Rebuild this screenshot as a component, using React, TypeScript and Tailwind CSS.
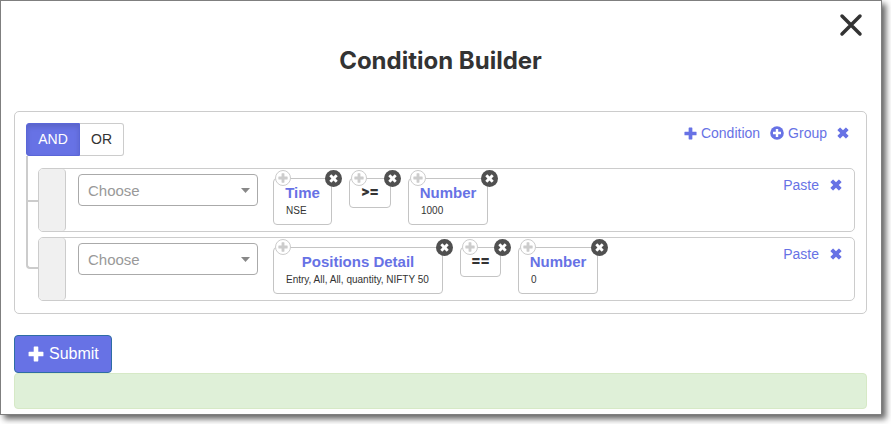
type Token = { title: string; detail?: string; size: string };
type Rule = { id: string; tokens: Token[] };

const rules: Rule[] = [
  {
    id: "rule-1",
    tokens: [
      { title: "Time", detail: "NSE", size: "min-w-[59px]" },
      { title: ">=", size: "min-w-[42px]" },
      { title: "Number", detail: "1000", size: "min-w-[80px]" },
    ],
  },
  {
    id: "rule-2",
    tokens: [
      { title: "Positions Detail", detail: "Entry, All, All, quantity, NIFTY 50", size: "min-w-[170px]" },
      { title: "==", size: "min-w-[41px]" },
      { title: "Number", detail: "0", size: "min-w-[80px]" },
    ],
  },
];

function Plus({ className }: { className: string }) {
  return (
    <svg viewBox="0 0 14 14" fill="currentColor" className={className} aria-hidden="true">
      <path d="M5 1q0-.5.5-.5h3q.5 0 .5.5v4h4q.5 0 .5.5v3q0 .5-.5.5H9v4q0 .5-.5.5h-3Q5 13.500 5 13V9H1q-.5 0-.5-.5v-3Q.5 5 1 5h4z" />
    </svg>
  );
}

function Cross({ className }: { className: string }) {
  return (
    <svg viewBox="0 0 14 14" fill="currentColor" className={className} aria-hidden="true">
      <path d="M4 .8 7 3.800l3-3q.4-.4.8 0l2.400 2.400q.4.4 0 .8l-3 3 3 3q.4.4 0 .8l-2.400 2.400q-.4.4-.8 0l-3-3-3 3q-.4.4-.8 0L.8 10.800q-.4-.4 0-.8l3-3-3-3q-.4-.4 0-.8L3.200.8q.4-.4.8 0z" />
    </svg>
  );
}

function PlusCircle() {
  return (
    <svg viewBox="0 0 14 14" className="size-[14px]" aria-hidden="true">
      <circle cx="7" cy="7" r="6.800" fill="currentColor" />
      <path d="M7 3v8M3 7h8" stroke="#fff" strokeWidth="2.400" />
    </svg>
  );
}

function TokenCard({ token }: { token: Token }) {
  return (
    <div className={`relative flex flex-col items-start rounded-[4px] border border-[#c4c4c4] px-[10px] pt-1 ${token.size} ${token.detail ? "h-[47px]" : "h-[30px]"}`}>
      <button type="button" aria-label="Add" className="absolute -top-[9px] left-px flex size-4 items-center justify-center rounded-full border border-[#ccc] bg-white text-[#ccc]">
        <Plus className="size-[10px]" />
      </button>
      <button type="button" aria-label="Remove" className="absolute -top-[9px] -right-[11px] flex size-[17px] items-center justify-center rounded-full bg-[#505050] text-white">
        <Cross className="size-[9px]" />
      </button>
      {token.detail ? (
        <>
          <span className="w-full text-center text-[15px] leading-5 font-bold whitespace-nowrap text-[#6772e5]">{token.title}</span>
          <span className="px-[2px] text-[10px] leading-4 whitespace-nowrap">{token.detail}</span>
        </>
      ) : (
        <span className="w-full text-center font-['Roboto',sans-serif] text-[16px] leading-[18px] font-black whitespace-nowrap">{token.title}</span>
      )}
    </div>
  );
}

function RuleRow({ rule, last }: { rule: Rule; last: boolean }) {
  return (
    <li className="flex">
      <div className="flex w-3 shrink-0 flex-col" aria-hidden="true">
        <div className={last ? "h-8 rounded-bl-[4px] border-b-2 border-l-2 border-[#ccc]" : "h-[46px] border-b-2 border-l-2 border-[#ccc]"} />
        {!last && <div className="flex-1 border-l-2 border-[#ccc]" />}
      </div>
      <div className={last ? "min-w-0 flex-1" : "min-w-0 flex-1 pt-3 pb-[5px]"}>
        <div className="flex h-16 items-start rounded-[5px] border border-[#ccc]">
          <div className="w-[27px] shrink-0 self-stretch rounded-[4px] border-r border-[#ccc] bg-[#f0f0f0]" />
          <div className="relative mt-[5px] ml-3">
            <select id={rule.id} aria-label="Field" defaultValue="" className="block h-8 w-[180px] appearance-none rounded-[4px] border border-[#aaa] bg-white px-[9px] pt-[2px] text-[15px] text-[#999]">
              <option value="">Choose</option>
            </select>
            <svg viewBox="0 0 9 5" className="pointer-events-none absolute top-[14px] right-[8px] h-[5px] w-[9px]" aria-hidden="true">
              <path d="M0 0h9L4.500 5z" fill="#888" />
            </svg>
          </div>
          <div className="mt-[9px] ml-[15px] flex items-start gap-[17px]">
            {rule.tokens.map((token) => (
              <TokenCard key={token.title} token={token} />
            ))}
          </div>
          <div className="mt-[6px] mr-3 ml-auto flex items-center gap-[11px] text-[14px] leading-5 text-[#6772e5]">
            <button type="button">Paste</button>
            <button type="button" aria-label="Remove condition"><Cross className="size-[12px]" /></button>
          </div>
        </div>
      </div>
    </li>
  );
}

export default function App() {
  return (
    <div className="bg-white pr-[9px] pb-[9px] font-['Liberation_Sans',Arial,sans-serif] text-[#333]">
      <main className="border border-[#7f7f7f] bg-white pr-[14px] pb-[5px] pl-[13px] shadow-[4px_4px_6px_0px_rgba(0,0,0,0.6)]">
        <div className="flex h-12 items-center justify-end pr-1">
          <button type="button" aria-label="Close">
            <svg viewBox="0 0 24 24" className="size-6" fill="none" stroke="#333" strokeWidth="3.500" strokeLinecap="round" aria-hidden="true">
              <path d="M3 3l18 18M21 3 3 21" />
            </svg>
          </button>
        </div>
        <h1 className="text-center font-['Inter',sans-serif] text-[24px] leading-6 font-bold">Condition Builder</h1>

        <section className="mt-[38px] rounded-[5px] border border-[#ccc] px-[11px] pt-[11px] pb-3">
          <div className="flex items-start justify-between">
            <div className="flex h-[33px] text-[14px]">
              <button type="button" className="w-[54px] rounded-l-[3px] border border-[#5a66d8] bg-[#6772e5] text-white shadow-[inset_0_3px_5px_rgba(0,0,0,0.125)]">AND</button>
              <button type="button" className="w-11 rounded-r-[3px] border border-l-0 border-[#ccc] bg-white">OR</button>
            </div>
            <div className="mr-[6px] flex h-5 items-center gap-[10px] text-[14px] leading-5 text-[#6772e5]">
              <button type="button" className="flex items-center gap-1"><Plus className="size-[13px]" />Condition</button>
              <button type="button" className="flex items-center gap-1"><PlusCircle />Group</button>
              <button type="button" aria-label="Remove group"><Cross className="size-[12px]" /></button>
            </div>
          </div>
          <ul>
            {rules.map((rule, i) => (
              <RuleRow key={rule.id} rule={rule} last={i === rules.length - 1} />
            ))}
          </ul>
        </section>

        <button type="submit" className="mt-[21px] flex h-[38px] items-center gap-[5px] rounded-[4px] border border-[#2e6da4] bg-[#6772e5] pr-3 pl-[13px] text-[16px] text-white">
          <Plus className="size-4" />Submit
        </button>
        <div role="status" className="h-9 rounded-[4px] border border-[#d6e9c6] bg-[#dff0d8]" />
      </main>
    </div>
  );
}
